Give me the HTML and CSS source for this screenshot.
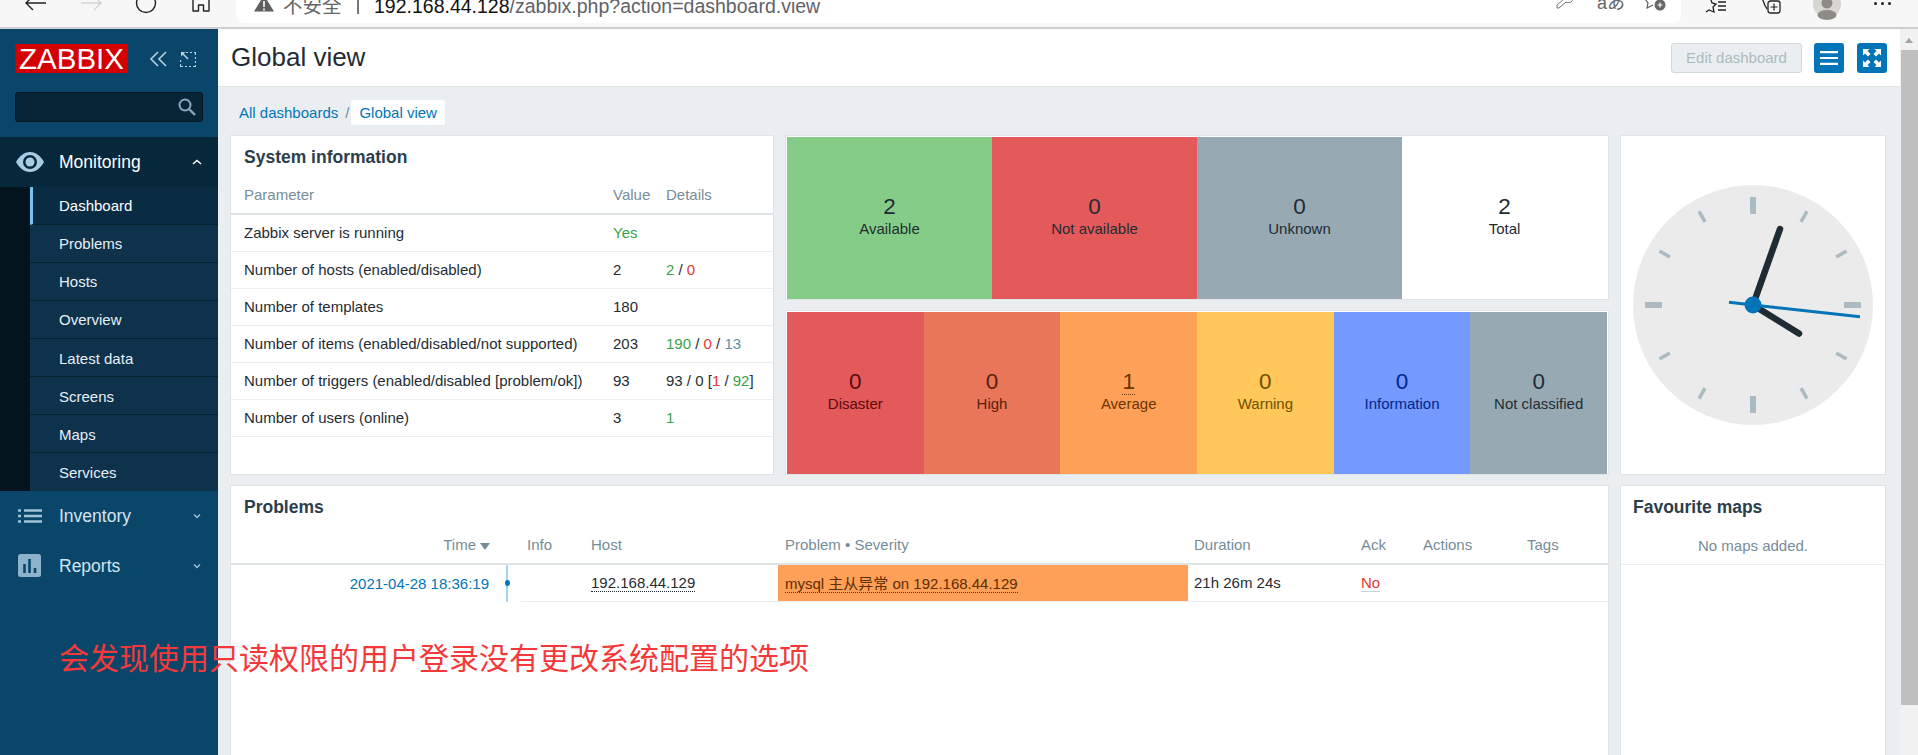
FILE: index.html
```html
<!DOCTYPE html>
<html lang="en">
<head>
<meta charset="utf-8">
<title>Global view</title>
<link rel="stylesheet" href="styles.css">
</head>
<body>
<div class="browser">
  <svg class="nav-icon" viewBox="0 0 24 27"><path d="M22 3H2M9 -4L2 3L9 10" fill="none" stroke="#222" stroke-width="1.4"/></svg>
  <svg class="nav-icon" viewBox="0 0 24 27"><path d="M2 3H22M15 -4L22 3L15 10" fill="none" stroke="#d4d4d4" stroke-width="1.4"/></svg>
  <svg class="nav-icon" viewBox="0 0 24 27"><circle cx="12" cy="3" r="9.5" fill="none" stroke="#222" stroke-width="1.4"/></svg>
  <svg class="nav-icon" viewBox="0 0 24 27"><path d="M4 -2V11H9.5V5H14.5V11H20V-2" fill="none" stroke="#222" stroke-width="1.4" stroke-linejoin="round"/></svg>
  <div class="address">
    <svg class="warn" viewBox="0 0 20 14"><path d="M10 -4L20 12.5H0Z" fill="#5f5f5f"/><path d="M10 2V8M10 9.5V11.5" stroke="#fff" stroke-width="1.6"/></svg>
    <span class="insecure">不安全</span>
    <span class="divider"></span>
    <span class="url"><b>192.168.44.128</b>/zabbix.php?action=dashboard.view</span>
    <svg class="addr-icon key" viewBox="0 0 20 27"><path d="M15 -2C18 0 18 4 15 6C13 7 11 6.500 10 6L3 12H1V9L8 3" fill="none" stroke="#777" stroke-width="1"/></svg>
    <span class="read-aloud">aあ</span>
    <svg class="addr-icon fav" viewBox="0 0 24 27"><path d="M7 -3L9 3H15M7 -3L5 3L1 3L4 7L3 12L9 9" fill="none" stroke="#555" stroke-width="1.100"/><circle cx="16" cy="9" r="5.500" fill="#666"/><path d="M13.500 9H18.500M16 6.500V11.500" stroke="#fff" stroke-width="1.200"/></svg>
  </div>
  <svg class="tool-icon first" viewBox="0 0 24 27"><path d="M5 -3L7 3L11 4L8 7L9 12L4 10L1 12" fill="none" stroke="#222" stroke-width="1.300"/><path d="M13 2H21M13 6H21M13 10H21" stroke="#222" stroke-width="1.300"/></svg>
  <svg class="tool-icon" viewBox="0 0 24 27"><path d="M1 -3C2 1 3 5 6 9" fill="none" stroke="#222" stroke-width="1.300"/><rect x="7" y="1" width="12" height="12" rx="2.500" fill="none" stroke="#222" stroke-width="1.300"/><path d="M9.500 7H16.500M13 3.500V10.500" stroke="#222" stroke-width="1.200"/></svg>
  <svg class="avatar" viewBox="0 0 28 20"><circle cx="14" cy="4" r="14" fill="#d8d6d2"/><circle cx="14" cy="3" r="5.500" fill="#8e8b87"/><ellipse cx="14" cy="15" rx="9.500" ry="5" fill="#8e8b87"/></svg>
  <span class="more"><i></i><i></i><i></i></span>
</div>

<div class="app">
  <aside class="sidebar">
    <div class="brand">
      <span class="logo">ZABBIX</span>
      <svg class="collapse" viewBox="0 0 18 16"><path d="M9 1L2 8L9 15M17 1L10 8L17 15" fill="none" stroke="#b8cfde" stroke-width="1.600"/></svg>
      <svg class="kiosk" viewBox="0 0 16 16"><path d="M6 1.500H8M10 1.500H12M14 1.500H15.500V4M15.500 6V8M15.500 10V12M15.500 14V15.500H13M11 15.500H9M7 15.500H5M3 15.500H.5V13M.5 11V9" fill="none" stroke="#b8cfde" stroke-width="1.200"/><path d="M1 1H5.500L1 5.500Z" fill="#b8cfde"/><path d="M3 3L8 8" stroke="#b8cfde" stroke-width="1.600"/></svg>
    </div>
    <div class="search">
      <svg class="magnifier" viewBox="0 0 18 18"><circle cx="7" cy="7" r="5.500" fill="none" stroke="#86a9bd" stroke-width="2"/><path d="M11 11L17 17" stroke="#86a9bd" stroke-width="2.400"/></svg>
    </div>
    <nav>
      <div class="menu-head open">
        <svg class="menu-icon" viewBox="0 0 28 20"><path d="M0 10C4 3 9 0 14 0S24 3 28 10C24 17 19 20 14 20S4 17 0 10Z" fill="#a8cde2"/><circle cx="14" cy="10" r="7" fill="#07273b"/><circle cx="14" cy="10" r="4.500" fill="#a8cde2"/></svg>
        <span class="menu-label">Monitoring</span>
        <svg class="chev" viewBox="0 0 10 6"><path d="M1 5L5 1.500L9 5" fill="none" stroke="#fff" stroke-width="1.400"/></svg>
      </div>
      <div class="submenu">
        <ul>
          <li class="active">Dashboard</li>
          <li>Problems</li>
          <li>Hosts</li>
          <li>Overview</li>
          <li>Latest data</li>
          <li>Screens</li>
          <li>Maps</li>
          <li>Services</li>
        </ul>
      </div>
      <div class="menu-head">
        <svg class="menu-icon list" viewBox="0 0 24 14"><path d="M0 1.500H3M6 1.500H24M0 7H3M6 7H24M0 12.500H3M6 12.500H24" stroke="#a0c3d8" stroke-width="2.500"/></svg>
        <span class="menu-label">Inventory</span>
        <svg class="chev" viewBox="0 0 10 6"><path d="M2 1.500L5 4.500L8 1.500" fill="none" stroke="#a0c3d8" stroke-width="1.400"/></svg>
      </div>
      <div class="menu-head">
        <svg class="menu-icon report" viewBox="0 0 24 24"><rect width="23" height="23" rx="2.500" fill="#8db2cb"/><path d="M6.500 10V19M11.500 5V19M17 14V19" stroke="#0a466a" stroke-width="2.600"/></svg>
        <span class="menu-label">Reports</span>
        <svg class="chev" viewBox="0 0 10 6"><path d="M2 1.500L5 4.500L8 1.500" fill="none" stroke="#a0c3d8" stroke-width="1.400"/></svg>
      </div>
    </nav>
  </aside>

  <main class="main">
    <header class="page-head">
      <h1>Global view</h1>
      <div class="head-actions">
        <button class="btn-edit">Edit dashboard</button>
        <span class="btn-icon"><svg viewBox="0 0 18 14"><path d="M0 1.200H18M0 7H18M0 12.800H18" stroke="#fff" stroke-width="2.200"/></svg></span>
        <span class="btn-icon"><svg viewBox="0 0 18 18"><path d="M0 0H6.500L4.500 2L7.500 5L5 7.500L2 4.500L0 6.500ZM18 0V6.500L16 4.500L13 7.500L10.500 5L13.500 2L11.500 0ZM0 18V11.500L2 13.500L5 10.500L7.500 13L4.500 16L6.500 18ZM18 18H11.500L13.500 16L10.500 13L13 10.500L16 13.500L18 11.500Z" fill="#fff"/></svg></span>
      </div>
    </header>
    <div class="crumbs">
      <a class="crumb-link">All dashboards</a>
      <span class="crumb-sep">/</span>
      <span class="crumb-current">Global view</span>
    </div>
    <div class="grid">
      <section class="widget sysinfo">
        <h2>System information</h2>
        <table class="table info-table">
          <thead><tr><th>Parameter</th><th>Value</th><th>Details</th></tr></thead>
          <tbody>
            <tr><td>Zabbix server is running</td><td class="green">Yes</td><td></td></tr>
            <tr><td>Number of hosts (enabled/disabled)</td><td>2</td><td><span class="green">2</span> / <span class="red">0</span></td></tr>
            <tr><td>Number of templates</td><td>180</td><td></td></tr>
            <tr><td>Number of items (enabled/disabled/not supported)</td><td>203</td><td><span class="green">190</span> / <span class="red">0</span> / <span class="grey">13</span></td></tr>
            <tr><td>Number of triggers (enabled/disabled [problem/ok])</td><td>93</td><td>93 / 0 [<span class="red">1</span> / <span class="green">92</span>]</td></tr>
            <tr><td>Number of users (online)</td><td>3</td><td><span class="green">1</span></td></tr>
          </tbody>
        </table>
      </section>

      <section class="widget status hosts">
        <div class="cell c-green"><strong>2</strong><span>Available</span></div>
        <div class="cell c-red"><strong>0</strong><span>Not available</span></div>
        <div class="cell c-grey"><strong>0</strong><span>Unknown</span></div>
        <div class="cell c-white"><strong>2</strong><span>Total</span></div>
      </section>

      <section class="widget clock">
        <svg class="clock-face" viewBox="-120 -120 240 240">
          <circle r="120" fill="#ebebeb"/>
          <g fill="#acbbc2">
            <rect class="major" x="-3" y="-108" width="6" height="17"/>
            <rect x="-3" y="-108" width="6" height="17" transform="rotate(90)"/>
            <rect x="-3" y="-108" width="6" height="17" transform="rotate(180)"/>
            <rect x="-3" y="-108" width="6" height="17" transform="rotate(270)"/>
            <rect x="-1.800" y="-108" width="3.600" height="12" transform="rotate(30)"/>
            <rect x="-1.800" y="-108" width="3.600" height="12" transform="rotate(60)"/>
            <rect x="-1.800" y="-108" width="3.600" height="12" transform="rotate(120)"/>
            <rect x="-1.800" y="-108" width="3.600" height="12" transform="rotate(150)"/>
            <rect x="-1.800" y="-108" width="3.600" height="12" transform="rotate(210)"/>
            <rect x="-1.800" y="-108" width="3.600" height="12" transform="rotate(240)"/>
            <rect x="-1.800" y="-108" width="3.600" height="12" transform="rotate(300)"/>
            <rect x="-1.800" y="-108" width="3.600" height="12" transform="rotate(330)"/>
          </g>
          <path d="M0 0L46 28.500" stroke="#1f2c33" stroke-width="6.500" stroke-linecap="round"/>
          <path d="M0 0L27 -76" stroke="#1f2c33" stroke-width="6.500" stroke-linecap="round"/>
          <path d="M-24 -2.700L107 11.700" stroke="#0275b8" stroke-width="3"/>
          <circle r="8.500" fill="#0275b8"/>
        </svg>
      </section>

      <section class="widget status triggers">
        <div class="cell c-red t-disaster"><strong>0</strong><span>Disaster</span></div>
        <div class="cell c-high t-high"><strong>0</strong><span>High</span></div>
        <div class="cell c-orange t-average"><strong><u>1</u></strong><span>Average</span></div>
        <div class="cell c-yellow t-warning"><strong>0</strong><span>Warning</span></div>
        <div class="cell c-blue t-info"><strong>0</strong><span>Information</span></div>
        <div class="cell c-grey"><strong>0</strong><span>Not classified</span></div>
      </section>

      <section class="widget problems">
        <h2>Problems</h2>
        <table class="table problem-table">
          <thead>
            <tr>
              <th class="col-time">Time<i class="sort"></i></th>
              <th class="col-line"></th>
              <th class="col-info">Info</th>
              <th class="col-host">Host</th>
              <th class="col-problem">Problem • Severity</th>
              <th class="col-dur">Duration</th>
              <th class="col-ack">Ack</th>
              <th class="col-act">Actions</th>
              <th class="col-tags">Tags</th>
            </tr>
          </thead>
          <tbody>
            <tr>
              <td class="col-time time-link">2021-04-28 18:36:19</td>
              <td class="col-line timeline"></td>
              <td></td>
              <td><span class="dotted">192.168.44.129</span></td>
              <td class="sev-average"><span class="dotted">mysql 主从异常 on 192.168.44.129</span></td>
              <td>21h 26m 24s</td>
              <td><span class="ack-no">No</span></td>
              <td></td>
              <td></td>
            </tr>
          </tbody>
        </table>
      </section>

      <section class="widget favourites">
        <h2>Favourite maps</h2>
        <div class="empty">No maps added.</div>
      </section>
    </div>
  </main>

  <div class="scrollbar">
    <i class="scroll-up"></i>
    <div class="scroll-thumb"></div>
  </div>
</div>

<div class="annotation">会发现使用只读权限的用户登录没有更改系统配置的选项</div>
</body>
</html>
```
FILE: styles.css
```css
* { box-sizing: border-box; }
html, body { margin: 0; height: 755px; overflow: hidden; }
body {
  position: relative;
  font-family: "Liberation Sans", "Noto Sans CJK SC", Arial, sans-serif;
  font-size: 15px;
  color: #1f2c33;
  background: #ebeef0;
}

/* browser chrome */
.browser {
  display: flex;
  height: 29px;
  padding-left: 24px;
  background: #f7f7f7;
  border-bottom: 2px solid #cfcfcf;
}
.nav-icon { width: 24px; height: 27px; margin-right: 31px; flex: none; }
.nav-icon:nth-child(4) { margin-right: 23px; }
.address {
  display: flex;
  align-items: flex-end;
  width: 1445px;
  height: 23px;
  padding: 0 0 7px 18px;
  background: #fff;
  border-radius: 0 0 8px 8px;
  color: #5f5f5f;
  flex: none;
}
.warn { width: 20px; height: 14px; flex: none; margin-bottom: 3px; }
.insecure { margin-left: 9px; font-size: 19.500px; line-height: 20px; color: #666; white-space: nowrap; width: 60px; flex: none; }
.divider { width: 2px; height: 20px; background: #777; margin: 0 15px 2px 14px; flex: none; }
.url { font-size: 19.500px; line-height: 20px; color: #5f6368; white-space: nowrap; flex: none; width: 641px; }
.url b { font-weight: 400; color: #111; }
.addr-icon { flex: none; height: 27px; align-self: flex-start; margin-top: -4px; }
.key { width: 20px; margin-left: 541px; }
.read-aloud { font-size: 18px; line-height: 18px; color: #666; margin-left: 21px; margin-bottom: 4px; width: 24px; flex: none; white-space: nowrap; }
.fav { width: 24px; margin-left: 23px; }
.tool-icon { width: 24px; height: 27px; flex: none; }
.tool-icon.first { margin-left: 24px; margin-right: 32px; }
.avatar { width: 28px; height: 20px; flex: none; margin-left: 28px; }
.more { display: flex; gap: 4px; margin: 2px 0 0 33px; height: 3px; }
.more i { width: 3px; height: 3px; border-radius: 50%; background: #222; }

/* layout */
.app { display: flex; height: 726px; }

/* sidebar */
.sidebar { width: 218px; flex: none; background: #0a466a; }
.brand { display: flex; align-items: flex-start; height: 63px; padding: 15px 0 0 15px; }
.logo {
  width: 113px;
  height: 29px;
  background: #d40000;
  color: #fff;
  font-size: 29.500px;
  line-height: 29px;
  text-align: center;
}
.collapse { width: 18px; height: 16px; margin: 7px 0 0 21px; }
.kiosk { width: 16px; height: 16px; margin: 7px 0 0 13px; }
.search {
  display: flex;
  align-items: center;
  justify-content: flex-end;
  width: 188px;
  height: 30px;
  margin-left: 15px;
  padding-right: 6px;
  background: #082537;
  border: 1px solid #04141e;
  border-radius: 3px;
}
.magnifier { width: 18px; height: 18px; }
nav { margin-top: 15px; }
.menu-head {
  display: flex;
  align-items: center;
  height: 50px;
  padding-left: 16px;
  color: #d5e4ee;
  font-size: 17.500px;
}
.menu-head.open { background: #07273b; color: #fff; }
.menu-icon { width: 28px; height: 20px; flex: none; }
.menu-icon.list { width: 24px; height: 14px; margin-left: 2px; margin-right: 2px; }
.menu-icon.report { width: 24px; height: 24px; margin-left: 2px; margin-right: 2px; }
.menu-label { margin-left: 15px; flex: 1; }
.chev { width: 10px; height: 6px; margin-right: 16px; flex: none; }
.submenu { padding-left: 30px; background: #04141e; }
.submenu ul { margin: 0; padding: 0; list-style: none; }
.submenu li {
  height: 38px;
  padding-left: 29px;
  line-height: 38px;
  color: #e6eff5;
  background: #0e314c;
  border-bottom: 1px solid #05202f;
}
.submenu li:nth-child(n+5) { line-height: 40px; }
.submenu li:last-child { border-bottom: 0; }
.submenu li.active { padding-left: 26px; background: #0a2c43; color: #fff; border-left: 3px solid #78c1f3; }

/* main */
.main { flex: 1; min-width: 0; overflow: hidden; }
.page-head {
  display: flex;
  align-items: center;
  justify-content: space-between;
  height: 58px;
  padding: 0 13px;
  background: #fff;
  border-bottom: 1px solid #dfe4e7;
}
h1 { margin: 0; font-size: 26px; font-weight: 400; color: #1f2c33; }
.head-actions { display: flex; align-items: center; }
.btn-edit {
  width: 131px;
  height: 30px;
  padding: 0;
  margin-right: 12px;
  font: 15px "Liberation Sans", Arial, sans-serif;
  color: #acbbc2;
  background: #ebeef0;
  border: 1px solid #cfd8dc;
  border-radius: 3px;
}
.btn-icon {
  display: flex;
  align-items: center;
  justify-content: center;
  width: 30px;
  height: 30px;
  background: #0275b8;
  border-radius: 3px;
}
.btn-icon + .btn-icon { margin-left: 13px; }
.btn-icon svg { width: 18px; height: 18px; }
.crumbs { display: flex; align-items: center; height: 25px; margin: 13px 0 0 21px; }
.crumb-link { color: #0275b8; }
.crumb-sep { margin: 0 2px 0 7px; color: #768d99; }
.crumb-current {
  height: 25px;
  padding: 0 8px;
  line-height: 25px;
  color: #0275b8;
  background: #fff;
  border-radius: 2px;
}
.grid {
  display: grid;
  grid-template-columns: 544px 824px 266px;
  grid-template-rows: 165px 165px 400px;
  gap: 10px 11px;
  margin: 10px 0 0 12px;
}
.widget { background: #fff; border: 1px solid #dfe4e7; }
.widget h2 {
  height: 42px;
  margin: 0;
  padding-left: 13px;
  font-size: 17.500px;
  line-height: 42px;
  font-weight: 700;
  color: #2c3e4c;
}
.favourites.widget h2 { padding-left: 12px; }
.sysinfo { grid-row: 1 / 3; }
.clock { grid-column: 3; grid-row: 1 / 3; display: flex; align-items: center; justify-content: center; }
.clock-face { width: 240px; height: 240px; }
.hosts { grid-column: 2; grid-row: 1; }
.triggers { grid-column: 2; grid-row: 2; }
.problems { grid-column: 1 / 3; grid-row: 3; }
.favourites { grid-column: 3; grid-row: 3; }

/* tables */
.table { border-collapse: separate; border-spacing: 0; table-layout: fixed; }
.table th {
  height: 37px;
  padding: 0 0 2px 12px;
  text-align: left;
  font-weight: 400;
  color: #768d99;
  border-bottom: 2px solid #dfe4e7;
}
.table td {
  height: 37px;
  padding: 0 0 1px 12px;
  white-space: nowrap;
  border-bottom: 1px solid #ebeef0;
}
.info-table { width: 542px; }
.info-table th:nth-child(1) { width: 370px; }
.info-table th:nth-child(1), .info-table td:nth-child(1) { padding-left: 13px; }
.info-table th:nth-child(2) { width: 53px; }
.green { color: #3aa24a; }
.red { color: #e33734; }
.grey { color: #5f8fa3; }

.problem-table { width: 1377px; }
.problem-table th, .problem-table td { padding-left: 6px; }
.problem-table .col-time { width: 266px; text-align: right; padding-right: 7px; }
.problem-table td.col-time { padding-right: 8px; }
.col-line { width: 24px; }
.col-info { width: 64px; }
.col-host { width: 193px; }
.problem-table .col-problem { width: 410px; padding-left: 7px; }
.col-dur { width: 167px; }
.col-ack { width: 62px; }
.col-act { width: 104px; }
.col-tags { width: 87px; }
.sort {
  display: inline-block;
  margin-left: 4px;
  border-left: 5px solid transparent;
  border-right: 5px solid transparent;
  border-top: 7px solid #768d99;
}
.problem-table td.time-link { color: #0275b8; border-bottom: 0; }
.problem-table td.timeline {
  position: relative;
  border-bottom: 0;
  background: linear-gradient(#a3d4f0, #a3d4f0) 9px 0 / 2px 100% no-repeat;
}
.timeline::after {
  content: "";
  position: absolute;
  left: 8px;
  top: 15px;
  width: 5px;
  height: 6px;
  border-radius: 50%;
  background: #0275b8;
}
.dotted { border-bottom: 1px dotted #1f2c33; }
.problem-table td.sev-average { padding-left: 7px; background: #ffa059; color: #5c2e00; }
.sev-average .dotted { border-bottom-color: #5c2e00; }
.ack-no { color: #e33734; border-bottom: 1px solid #c9d3da; }

/* status blocks */
.status { display: flex; padding: 1px 1px 0; }
.cell {
  flex: 1;
  display: flex;
  flex-direction: column;
  align-items: center;
  justify-content: center;
  padding-bottom: 3px;
  color: #1f2c33;
}
.cell strong { font-size: 22.500px; line-height: 24px; font-weight: 400; }
.cell span { line-height: 19px; }
.cell u { text-decoration: none; border-bottom: 1px dotted currentColor; }
.c-green { background: #86cc89; }
.c-red { background: #e45959; }
.c-grey { background: #97aab3; }
.c-white { background: #fff; }
.c-high { background: #e97659; }
.c-orange { background: #ffa059; }
.c-yellow { background: #ffc859; }
.c-blue { background: #7499ff; }
.t-disaster { color: #5a0c0c; }
.t-high { color: #5a1f0c; }
.t-average { color: #6b3500; }
.t-warning { color: #734d00; }
.t-info { color: #00268e; }

/* favourites */
.empty {
  height: 37px;
  padding-bottom: 2px;
  text-align: center;
  line-height: 35px;
  color: #768d99;
  border-bottom: 1px solid #ebeef0;
}

/* scrollbar */
.scrollbar { position: relative; width: 18px; flex: none; background: #f1f1f1; }
.scroll-thumb { height: 655px; margin: 21px 0 0 1px; background: #bfbfbf; }
.scroll-up {
  position: absolute;
  left: 5px;
  top: 9px;
  border-left: 4.500px solid transparent;
  border-right: 4.500px solid transparent;
  border-bottom: 5px solid #a3a3a3;
}

/* red note written over the screenshot */
.annotation {
  position: absolute;
  left: 59px;
  top: 636px;
  font-family: "Noto Sans CJK SC", sans-serif;
  font-size: 30px;
  line-height: 40px;
  color: #f5393a;
  white-space: nowrap;
}
```
